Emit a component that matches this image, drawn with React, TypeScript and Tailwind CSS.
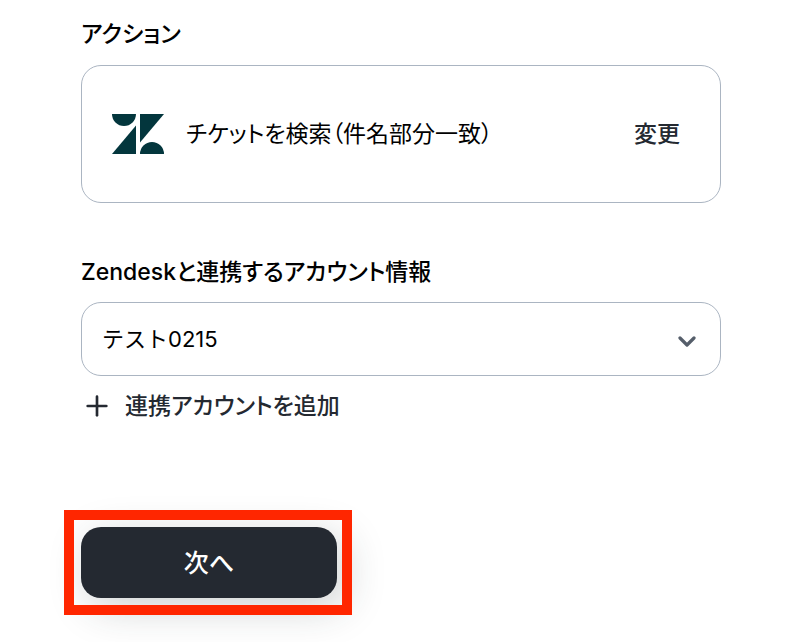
import { Plus } from 'lucide-react'

const accounts = [
  { id: '0215', name: 'テスト0215' },
]

const ZendeskLogo = () => (
  <svg viewBox="0 0 52 40" className="h-10 w-[52px] shrink-0" fill="#03363d" aria-hidden="true">
    <path d="M0 0h24a12 12 0 0 1-24 0Z" />
    <path d="M28 0h24L28 28.6Z" />
    <path d="M24 11.4V40H0Z" />
    <path d="M28 40a12 12 0 0 1 24 0Z" />
  </svg>
)

const App = () => {
  return (
    <main className="w-full bg-white pt-4 pr-[73px] pb-11 pl-[81px] font-['Inter','Noto_Sans_CJK_JP',sans-serif] text-[23px] leading-9 text-black [font-feature-settings:'palt']">
      <section>
        <h2 className="font-medium">アクション</h2>
        <div className="mt-[13px] flex h-[138px] items-center gap-[22px] rounded-[20px] border border-[#abb5c2] pr-10 pl-[30px]">
          <ZendeskLogo />
          <p className="flex-1">チケットを検索（件名部分一致）</p>
          <button type="button" className="font-medium text-[#242931]">変更</button>
        </div>
      </section>

      <section className="mt-[51px]">
        <label htmlFor="account" className="block font-medium">Zendeskと連携するアカウント情報</label>
        <div className="relative mt-3">
          <select
            id="account"
            className="block h-[74px] w-full appearance-none rounded-[20px] border border-[#abb5c2] bg-white pr-14 pl-5 text-[22px] [font-feature-settings:normal]"
          >
            {accounts.map((account) => (
              <option key={account.id} value={account.id}>{account.name}</option>
            ))}
          </select>
          <svg
            viewBox="0 0 18 12"
            className="pointer-events-none absolute top-[34px] right-[25px] h-3 w-[18px]"
            fill="none"
            stroke="#555e6a"
            strokeWidth="3.2"
            strokeLinecap="round"
            strokeLinejoin="round"
            aria-hidden="true"
          >
            <path d="M2 2l7 7 7-7" />
          </svg>
        </div>
        <button type="button" className="mt-3 flex items-center gap-3 font-medium text-[#242931]">
          <Plus className="size-8" strokeWidth={2} />
          連携アカウントを追加
        </button>
      </section>

      <div className="relative mt-[103px] w-64">
        <button
          type="button"
          className="h-[71px] w-full rounded-[20px] bg-[#242931] text-[25px] font-medium text-white shadow-[8px_10px_40px_rgba(36,49,49,0.22)]"
        >
          次へ
        </button>
        {/* highlight frame around the next button */}
        <div className="pointer-events-none absolute -top-[17px] -right-[15px] -bottom-[17px] -left-[17px] border-[10px] border-[#ff2600]" />
      </div>
    </main>
  )
}

export default App
